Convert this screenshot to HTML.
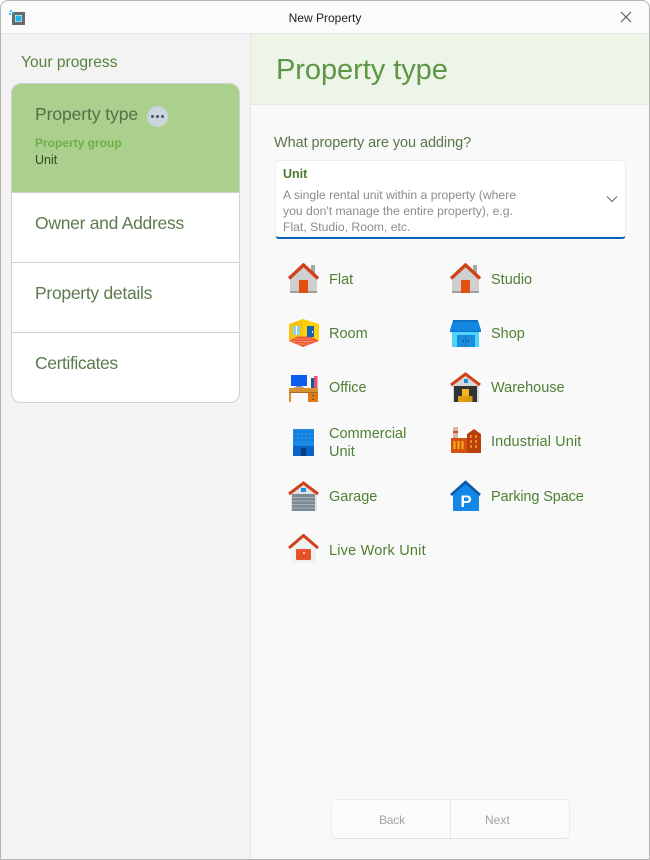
<!DOCTYPE html>
<html><head><meta charset="utf-8">
<style>
html,body{margin:0;padding:0;width:650px;height:860px;overflow:hidden;background:#fff}
*{box-sizing:border-box}
body{font-family:"Liberation Sans",sans-serif;position:relative}
.a{position:absolute}
.t{position:absolute;white-space:nowrap;line-height:1}
.g{color:#55823a}
.lbl{position:absolute;white-space:nowrap;font-size:14.5px;line-height:18px;color:#4f7f33}
.step{position:absolute;left:35px;font-size:17.5px;line-height:20px;color:#5d7a4e;white-space:nowrap;letter-spacing:-.28px}
svg.i{position:absolute;width:32px;height:32px}
</style></head><body>
<div class="a" style="left:0;top:0;width:650px;height:860px;background:#f9f9f9;border:1px solid #b5b5b5;border-radius:8px 8px 0 0;overflow:hidden"></div>
<!-- title bar -->
<div class="a" style="left:1px;top:1px;width:648px;height:33px;background:#fbfbfb;border-bottom:1px solid #e6e6e6;border-radius:8px 8px 0 0"></div>
<svg class="a" style="left:8px;top:9px;width:18px;height:18px" viewBox="0 0 18 18"><rect x="5.5" y="4.5" width="10" height="10" fill="#fff" stroke="#6a6a6a" stroke-width="3"/><rect x="7.5" y="6.5" width="6" height="6" fill="#1fb0e8"/><rect x="2" y="1" width="2" height="2" fill="#3cc0ee"/><rect x="1" y="4" width="2" height="2" fill="#3cc0ee"/><rect x="4" y="3" width="2" height="2" fill="#1fb0e8"/></svg>
<div class="t" style="left:0;width:650px;text-align:center;top:12px;font-size:12px;color:#222">New Property</div>
<svg class="a" style="left:620px;top:11px;width:12px;height:12px" viewBox="0 0 12 12"><path d="M1 1L11 11M11 1L1 11" stroke="#555" stroke-width="1.1" fill="none"/></svg>

<!-- left pane -->
<div class="a" style="left:1px;top:34px;width:250px;height:825px;background:#f3f3f3;border-right:1px solid #e5e5e5"></div>
<div class="t g" style="left:21px;top:55px;font-size:15.6px">Your progress</div>
<div class="a" style="left:11px;top:83px;width:229px;height:320px;background:#fff;border:1px solid #d2d2d2;border-radius:10px;overflow:hidden">
  <div class="a" style="left:0;top:0;width:227px;height:109px;background:#abd08d;border-bottom:1px solid #cfcfcf"></div>
  <div class="a" style="left:0;top:178px;width:227px;height:1px;background:#d0d0d0"></div>
  <div class="a" style="left:0;top:248px;width:227px;height:1px;background:#d0d0d0"></div>
</div>
<div class="step" style="top:104px;letter-spacing:-.08px;color:#557046">Property type</div>
<div class="a" style="left:147px;top:106px;width:21px;height:21px;border-radius:50%;background:#cdd5dc"></div>
<div class="a" style="left:151px;top:115px;width:3px;height:3px;border-radius:50%;background:#44556a"></div>
<div class="a" style="left:156px;top:115px;width:3px;height:3px;border-radius:50%;background:#44556a"></div>
<div class="a" style="left:161px;top:115px;width:3px;height:3px;border-radius:50%;background:#44556a"></div>
<div class="t" style="left:35px;top:137px;font-size:12px;font-weight:bold;color:#70ae4a">Property group</div>
<div class="t" style="left:35px;top:154px;font-size:12.5px;color:#2f4a22">Unit</div>
<div class="step" style="top:213px">Owner and Address</div>
<div class="step" style="top:283px">Property details</div>
<div class="step" style="top:353px;letter-spacing:-.4px">Certificates</div>

<!-- header -->
<div class="a" style="left:251px;top:34px;width:398px;height:71px;background:#edf4e8;border-bottom:1px solid #e6e9e3"></div>
<div class="t" style="left:276px;top:56px;font-size:29px;color:#5e9645;letter-spacing:-.05px">Property type</div>

<div class="t" style="left:274px;top:136px;font-size:14.5px;color:#5a7549;letter-spacing:-.07px">What property are you adding?</div>
<!-- combo -->
<div class="a" style="left:275px;top:160px;width:351px;height:79px;background:#fff;border:1px solid #ececec;border-bottom:2px solid #0a62b8;border-radius:4px"></div>
<div class="t" style="left:283px;top:168px;font-size:12.5px;font-weight:bold;color:#4a7a2c">Unit</div>
<div class="t" style="left:283px;top:189px;font-size:12.2px;color:#8b8b8b">A single rental unit within a property (where</div>
<div class="t" style="left:283px;top:205px;font-size:12.2px;color:#8b8b8b">you don't manage the entire property), e.g.</div>
<div class="t" style="left:283px;top:221px;font-size:12.2px;color:#8b8b8b">Flat, Studio, Room, etc.</div>
<svg class="a" style="left:606px;top:195px;width:12px;height:8px" viewBox="0 0 12 8"><path d="M1 1.5L6 6.5L11 1.5" stroke="#666" stroke-width="1" fill="none"/></svg>

<!-- Flat -->
<svg class="i" style="left:288px;top:263px" viewBox="0 0 32 32"><rect x="23" y="2" width="4" height="10" fill="#a6a6a6"/><path d="M2 15L15.5 3L29 15V30H2z" fill="#cfcfcf"/><rect x="2" y="28" width="27" height="2" fill="#9e9e9e"/><path d="M1 15.5L15.5 2L30 15.5" fill="none" stroke="#cf421a" stroke-width="3.4"/><rect x="11" y="17" width="9" height="13" fill="#e2500f"/></svg>
<div class="lbl" style="left:329px;top:271px">Flat</div>
<!-- Studio -->
<svg class="i" style="left:450px;top:263px" viewBox="0 0 32 32"><rect x="23" y="2" width="4" height="10" fill="#a6a6a6"/><path d="M2 15L15.5 3L29 15V30H2z" fill="#cfcfcf"/><rect x="2" y="28" width="27" height="2" fill="#9e9e9e"/><path d="M1 15.5L15.5 2L30 15.5" fill="none" stroke="#cf421a" stroke-width="3.4"/><rect x="11" y="17" width="9" height="13" fill="#e2500f"/></svg>
<div class="lbl" style="left:491px;top:271px">Studio</div>
<!-- Room -->
<svg class="i" style="left:288px;top:317px" viewBox="0 0 32 32"><path d="M1 7L15 2V20H9L1 24z" fill="#f5c40f"/><path d="M15 2L31 7V24L23 20H15z" fill="#fdd20a"/><path d="M1 24L9 19.5H23L31 24L15 30z" fill="#ef5a35"/><path d="M6 22H25M4 24.5H27M9 27H21" stroke="#f8896a" stroke-width="1"/><rect x="5" y="9" width="7" height="9" fill="#8fd0ee"/><rect x="8" y="9" width="1" height="9" fill="#fff"/><rect x="19" y="9" width="7" height="11" fill="#1464b4"/><rect x="24" y="14" width="1" height="2" fill="#fff"/></svg>
<div class="lbl" style="left:329px;top:325px">Room</div>
<!-- Shop -->
<svg class="i" style="left:450px;top:317px" viewBox="0 0 32 32"><rect x="2" y="14" width="27" height="16" fill="#4fd4fb"/><path d="M3 3.5Q3 3 4 3H27Q28 3 28 3.5L31 13V15H0V13z" fill="#1287df"/><rect x="3" y="3" width="25" height="2" fill="#0f6fc4"/><rect x="0" y="14" width="31" height="1" fill="#0f6fc4"/><rect x="7" y="18" width="18" height="12" fill="#1a8ddc"/><path d="M16 18V30" stroke="#0f6fc4"/><rect x="13" y="23" width="1" height="2" fill="#0a4f91"/><rect x="18" y="23" width="1" height="2" fill="#0a4f91"/></svg>
<div class="lbl" style="left:491px;top:325px">Shop</div>
<!-- Office -->
<svg class="i" style="left:288px;top:371px" viewBox="0 0 32 32"><rect x="3" y="4" width="16" height="11" fill="#0f5cf0"/><rect x="8" y="15" width="6" height="1.5" fill="#8a8a8a"/><rect x="6" y="16" width="10" height="1" fill="#aaa"/><rect x="23" y="7" width="3" height="10" fill="#1a5c8c"/><rect x="26" y="5" width="3.5" height="12" fill="#e0527a"/><rect x="1" y="17" width="29" height="5" fill="#d99033"/><rect x="1" y="21" width="29" height="1" fill="#a86a1e"/><rect x="1" y="22" width="2" height="9" fill="#d99033"/><rect x="20" y="22" width="10" height="9" fill="#dc7a1c"/><rect x="24" y="24" width="2" height="1" fill="#7a4a10"/><rect x="24" y="28" width="2" height="1" fill="#7a4a10"/></svg>
<div class="lbl" style="left:329px;top:379px">Office</div>
<!-- Warehouse -->
<svg class="i" style="left:450px;top:371px" viewBox="0 0 32 32"><path d="M3 13L15.5 3L29 13V31H3z" fill="#d8d8d8"/><rect x="14" y="8" width="4" height="4" fill="#1b8fe0"/><rect x="4" y="15" width="23" height="16" fill="#333"/><rect x="12" y="18" width="7" height="7" fill="#f3b61f"/><rect x="8" y="25" width="7.5" height="6" fill="#e2a010"/><rect x="15.5" y="25" width="7" height="6" fill="#d69a0e"/><path d="M1 14L15.5 3L30 14" fill="none" stroke="#cf421a" stroke-width="3"/></svg>
<div class="lbl" style="left:491px;top:379px">Warehouse</div>
<!-- Commercial -->
<svg class="i" style="left:288px;top:428px" viewBox="0 0 32 32"><rect x="5" y="1" width="21" height="27" fill="#1a8ae6"/><rect x="5" y="18" width="21" height="10" fill="#0a63c7"/><g fill="#0e6cc4" opacity=".75"><rect x="7" y="3" width="2" height="2"/><rect x="11" y="3" width="2" height="2"/><rect x="15" y="3" width="2" height="2"/><rect x="19" y="3" width="2" height="2"/><rect x="23" y="3" width="2" height="2"/><rect x="7" y="7" width="2" height="2"/><rect x="11" y="7" width="2" height="2"/><rect x="15" y="7" width="2" height="2"/><rect x="19" y="7" width="2" height="2"/><rect x="23" y="7" width="2" height="2"/><rect x="7" y="11" width="2" height="2"/><rect x="11" y="11" width="2" height="2"/><rect x="15" y="11" width="2" height="2"/><rect x="19" y="11" width="2" height="2"/><rect x="23" y="11" width="2" height="2"/></g><rect x="13" y="20" width="5" height="8" fill="#0b3f7c"/></svg>
<div class="lbl" style="left:329px;top:425px;line-height:18px">Commercial<br>Unit</div>
<!-- Industrial -->
<svg class="i" style="left:450px;top:425px" viewBox="0 0 32 32"><rect x="3" y="2" width="5" height="11" fill="#d8b6a2"/><rect x="3" y="6" width="5" height="2" fill="#c9501a"/><rect x="1" y="13" width="16" height="15" fill="#d6500f"/><path d="M17 9L24 4L31 9V28H17z" fill="#b8400c"/><g fill="#f6b01c"><rect x="3.5" y="16" width="2" height="8"/><rect x="7.5" y="16" width="2" height="8"/><rect x="11.5" y="16" width="2" height="8"/></g><g fill="#ee8a1c"><rect x="20" y="10" width="2" height="3"/><rect x="25" y="10" width="2" height="3"/><rect x="20" y="15" width="2" height="3"/><rect x="25" y="15" width="2" height="3"/><rect x="20" y="20" width="2" height="3"/><rect x="25" y="20" width="2" height="3"/></g></svg>
<div class="lbl" style="left:491px;top:433px;letter-spacing:.12px">Industrial Unit</div>
<!-- Garage -->
<svg class="i" style="left:288px;top:480px" viewBox="0 0 32 32"><path d="M3 13L15.5 3L29 13V31H3z" fill="#e0e0e0"/><rect x="13" y="8" width="5" height="4" fill="#1b8fe0"/><rect x="4" y="14" width="23" height="17" fill="#7d8a96"/><path d="M4 17.5H27M4 21H27M4 24.5H27M4 28H27" stroke="#a8b2bb" stroke-width="1"/><path d="M1 14L15.5 3L30 14" fill="none" stroke="#cf421a" stroke-width="3"/></svg>
<div class="lbl" style="left:329px;top:488px">Garage</div>
<!-- Parking -->
<svg class="i" style="left:450px;top:480px" viewBox="0 0 32 32"><path d="M3 14L15.5 3L29 14V31H3z" fill="#1388e8"/><path d="M1 15L15.5 2L30 15" fill="none" stroke="#0b5aa8" stroke-width="2.6"/><text x="16" y="27" text-anchor="middle" font-family="Liberation Sans" font-size="17" font-weight="bold" fill="#fff">P</text></svg>
<div class="lbl" style="left:491px;top:488px;letter-spacing:-.12px">Parking Space</div>
<!-- Live Work -->
<svg class="i" style="left:288px;top:534px" viewBox="0 0 32 32"><path d="M3 14L15.5 3L28 14V29H3z" fill="#f0f0f0"/><path d="M1 14L15.5 1.5L30 14" fill="none" stroke="#cf421a" stroke-width="3"/><rect x="8" y="15" width="15" height="11" rx="1" fill="#e8502c"/><rect x="15" y="18" width="2" height="2" fill="#ffd08a"/></svg>
<div class="lbl" style="left:329px;top:542px;letter-spacing:.2px">Live Work Unit</div>

<!-- footer buttons -->
<div class="a" style="left:331px;top:799px;width:239px;height:40px;background:#fbfbfb;border:1px solid #ececec;border-bottom:1px solid #e0e0e0;border-radius:5px"></div>
<div class="a" style="left:450px;top:800px;width:1px;height:38px;background:#e6e6e6"></div>
<div class="t" style="left:379px;top:814px;font-size:12px;letter-spacing:-.2px;color:#a3a3a3">Back</div>
<div class="t" style="left:485px;top:814px;font-size:12px;color:#a3a3a3">Next</div>
</body></html>
